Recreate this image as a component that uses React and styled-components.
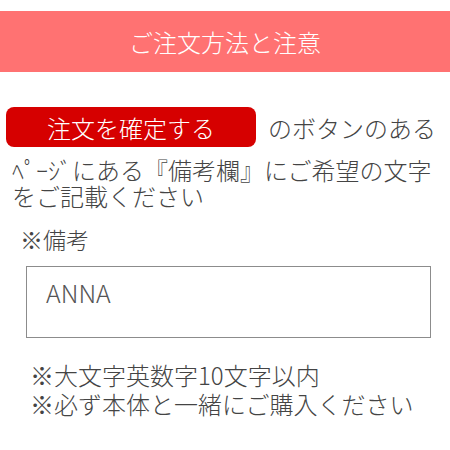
import React from 'react';
import styled, { createGlobalStyle } from 'styled-components';

const GlobalStyle = createGlobalStyle`
    body {
        margin: 0;
        background: #fff;
        font-family: "Noto Sans CJK JP", "Noto Sans", sans-serif;
        font-weight: 300;
        color: #444;
    }
`;

const Header = styled.h1`
    margin: 11px 0 0;
    height: 61px;
    line-height: 61px;
    background-color: #ff7272;
    color: #fff;
    font-size: 24px;
    font-weight: 300;
    text-align: center;
`;

const Content = styled.section`
    padding: 35px 0 0 6px;
`;

const ButtonRow = styled.div`
    display: flex;
    align-items: center;
    gap: 12px;
    height: 40px;
    font-size: 24px;
`;

const OrderButton = styled.span`
    display: flex;
    align-items: center;
    justify-content: center;
    width: 250px;
    height: 40px;
    border-radius: 8px;
    background-color: #d60000;
    color: #fff;
    font-size: 24px;
`;

const Text = styled.p`
    margin: 10px 0 0 6px;
    font-size: 24px;
    line-height: 26px;
`;

const Label = styled.p`
    margin: 17px 0 0 14px;
    font-size: 23px;
    line-height: 26px;
`;

const NoteBox = styled.div`
    box-sizing: border-box;
    width: 405px;
    height: 72px;
    margin: 14px 0 0 20px;
    padding: 10px 19px;
    border: 1px solid #8c8c8c;
    font-size: 25px;
    line-height: 30px;
    color: #555;
`;

const Notes = styled.ul`
    margin: 22px 0 0 24px;
    padding: 0;
    list-style: none;
    font-size: 24px;
    line-height: 29px;
`;

export default function App() {
    return (
        <>
            <GlobalStyle />
            <Header>ご注文方法と注意</Header>
            <Content>
                <ButtonRow>
                    <OrderButton>注文を確定する</OrderButton>
                    のボタンのある
                </ButtonRow>
                <Text>
                    ﾍﾟｰｼﾞにある『備考欄』にご希望の文字
                    <br />
                    をご記載ください
                </Text>
                <Label>※備考</Label>
                <NoteBox>ANNA</NoteBox>
                <Notes>
                    <li>※大文字英数字10文字以内</li>
                    <li>※必ず本体と一緒にご購入ください</li>
                </Notes>
            </Content>
        </>
    );
}
